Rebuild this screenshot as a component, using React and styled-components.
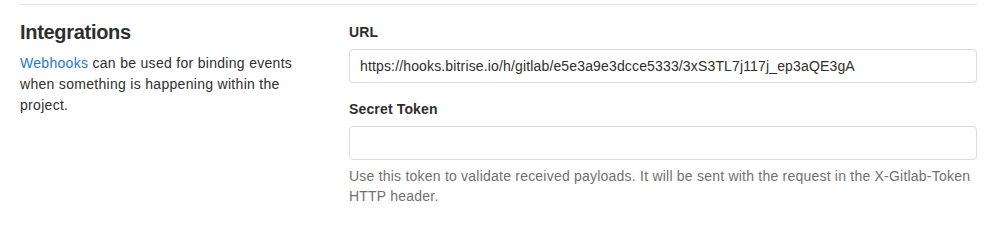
import React from 'react';
import styled, { createGlobalStyle } from 'styled-components';

const GlobalStyle = createGlobalStyle`
    body {
        margin: 0;
        background: #fff;
        font-family: "Liberation Sans", Arial, sans-serif;
        font-size: 14px;
        line-height: 20px;
        letter-spacing: 0.15px;
        color: #2e2e2e;
    }
`;

const Page = styled.div`
    padding: 4px 19px 0 20px;
`;

const Section = styled.section`
    display: grid;
    grid-template-columns: 299px 1fr;
    column-gap: 30px;
    border-top: 1px solid #e5e5e5;
    padding-top: 15px;
`;

const Intro = styled.div`
    display: flex;
    flex-direction: column;
    padding-right: 6px;
`;

const Heading = styled.h4`
    margin: 0 0 9px;
    font-size: 20px;
    line-height: 24px;
    font-weight: 700;
    letter-spacing: -0.3px;
    color: #2e2e2e;
`;

const Lead = styled.p`
    margin: 0;
    line-height: 21px;
    letter-spacing: 0.3px;
`;

const Link = styled.a`
    color: #1f78d1;
    text-decoration: none;
`;

const Form = styled.div`
    display: flex;
    flex-direction: column;
    padding-top: 2px;
`;

const Group = styled.div`
    display: flex;
    flex-direction: column;
    margin-bottom: ${props => (props.last ? '0' : '16px')};
`;

const Label = styled.label`
    font-weight: 700;
    margin-bottom: 7px;
`;

const Input = styled.input`
    box-sizing: border-box;
    height: 34px;
    padding: 6px 10px;
    border: 1px solid #dcdcdf;
    border-radius: 4px;
    font-family: inherit;
    font-size: 14px;
    letter-spacing: 0.15px;
    color: #2e2e2e;
    background: #fff;
    outline: none;
`;

const Help = styled.p`
    margin: 6px 0 0;
    color: #707070;
    letter-spacing: 0.22px;
`;

export default function App() {
    return (
        <Page>
            <GlobalStyle />
            <Section>
                <Intro>
                    <Heading>Integrations</Heading>
                    <Lead>
                        <Link href="#">Webhooks</Link> can be used for binding events when
                        something is happening within the project.
                    </Lead>
                </Intro>
                <Form>
                    <Group>
                        <Label>URL</Label>
                        <Input
                            type="text"
                            readOnly
                            value="https://hooks.bitrise.io/h/gitlab/e5e3a9e3dcce5333/3xS3TL7j117j_ep3aQE3gA"
                        />
                    </Group>
                    <Group last>
                        <Label>Secret Token</Label>
                        <Input type="text" />
                        <Help>
                            Use this token to validate received payloads. It will be sent with the
                            request in the X-Gitlab-Token HTTP header.
                        </Help>
                    </Group>
                </Form>
            </Section>
        </Page>
    );
}
